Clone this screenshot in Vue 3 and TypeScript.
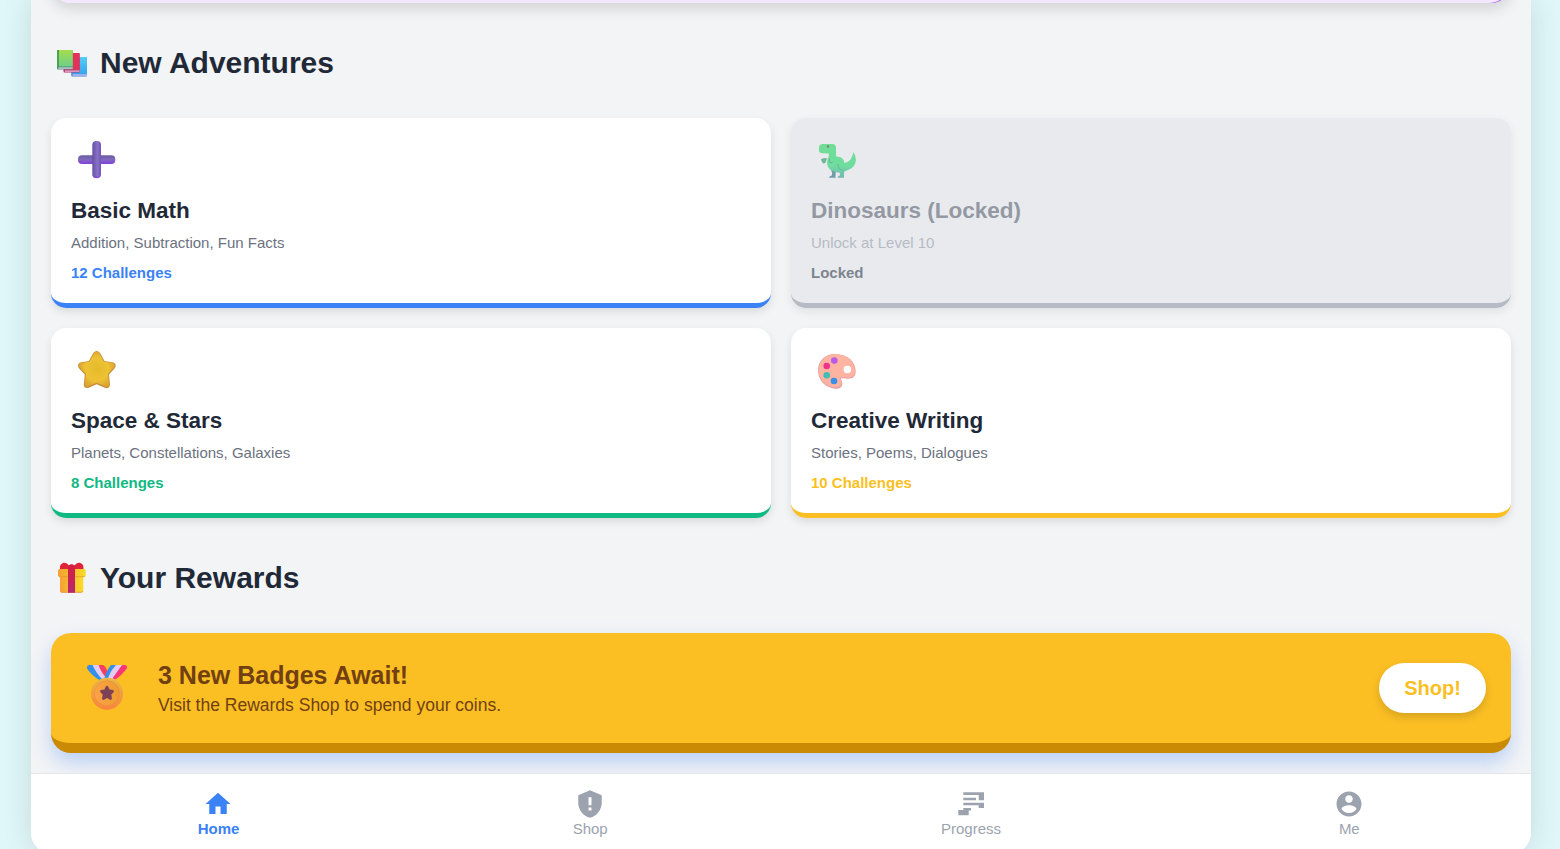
<script setup lang="ts">
interface Adventure {
  id: string
  title: string
  topics: string
  status: string
  tone: string
}

interface NavItem {
  id: string
  label: string
  active: boolean
}

const adventures: Adventure[] = [
  { id: 'math', title: 'Basic Math', topics: 'Addition, Subtraction, Fun Facts', status: '12 Challenges', tone: 'blue' },
  { id: 'dino', title: 'Dinosaurs (Locked)', topics: 'Unlock at Level 10', status: 'Locked', tone: 'locked' },
  { id: 'space', title: 'Space & Stars', topics: 'Planets, Constellations, Galaxies', status: '8 Challenges', tone: 'green' },
  { id: 'writing', title: 'Creative Writing', topics: 'Stories, Poems, Dialogues', status: '10 Challenges', tone: 'yellow' },
]

const navItems: NavItem[] = [
  { id: 'home', label: 'Home', active: true },
  { id: 'shop', label: 'Shop', active: false },
  { id: 'progress', label: 'Progress', active: false },
  { id: 'me', label: 'Me', active: false },
]
</script>

<template>
  <div class="app">
    <main class="content">
      <div class="hero-end"><div class="hero-track"></div></div>

      <h2 class="heading">
        <svg class="heading-icon" viewBox="0 0 34 34">
          <defs>
            <linearGradient id="bookGreen" x1="0" y1="0" x2="0" y2="1"><stop offset="0" stop-color="#a5dc4c" /><stop offset="1" stop-color="#6fd08a" /></linearGradient>
            <linearGradient id="bookBlue" x1="0" y1="0" x2="0" y2="1"><stop offset="0" stop-color="#55cdf5" /><stop offset="1" stop-color="#37a5ee" /></linearGradient>
          </defs>
          <rect x="16.3" y="11" width="15.7" height="19.6" rx="1" fill="#4480d4" />
          <rect x="17.2" y="11" width="14.8" height="17" rx=".8" fill="url(#bookBlue)" />
          <rect x="17.5" y="28.3" width="14.5" height="1.4" fill="#cbc5f2" />
          <rect x="8.5" y="7" width="16.1" height="19.6" rx="1" fill="#b52e68" />
          <rect x="10" y="7" width="14.6" height="17" rx=".8" fill="#e23259" />
          <rect x="9.8" y="24.5" width="14.6" height="1.2" fill="#e8c5e5" />
          <rect x="2" y="4" width="15.8" height="19.6" rx="1" fill="#4b8b69" />
          <rect x="2" y="4" width="2" height="17.5" rx=".8" fill="#49a353" />
          <rect x="4" y="4" width="13.8" height="16.5" rx=".6" fill="url(#bookGreen)" />
          <rect x="3.3" y="21.4" width="14.4" height="1.4" fill="#d0cbec" />
        </svg>
        <span>New Adventures</span>
      </h2>

      <section class="grid">
        <article v-for="card in adventures" :key="card.id" class="card" :class="card.tone">
          <svg v-if="card.id === 'math'" class="card-icon" viewBox="0 0 50 50">
            <defs>
              <linearGradient id="plusH" x1="0" y1="0" x2="0" y2="1"><stop offset="0" stop-color="#6b5d9d" /><stop offset=".5" stop-color="#8069bd" /><stop offset="1" stop-color="#843fe0" /></linearGradient>
              <linearGradient id="plusV" x1="0" y1="0" x2="1" y2="0"><stop offset="0" stop-color="#6650a4" /><stop offset=".6" stop-color="#8872c4" /><stop offset="1" stop-color="#7153b8" /></linearGradient>
            </defs>
            <rect x="7" y="17.3" width="37.3" height="8.7" rx="4" fill="url(#plusH)" />
            <rect x="21.3" y="3" width="8.7" height="37.2" rx="4" fill="url(#plusV)" />
            <path d="M24 38.5q1.7 1.5 3.5 0" stroke="#8a45e6" stroke-width="1.4" fill="none" />
          </svg>

          <svg v-else-if="card.id === 'dino'" class="card-icon" viewBox="0 0 50 50">
            <defs>
              <linearGradient id="dinoSkin" x1="0" y1="0" x2="0" y2="1"><stop offset="0" stop-color="#39d56c" /><stop offset=".65" stop-color="#38d47b" /><stop offset="1" stop-color="#3f9b98" /></linearGradient>
            </defs>
            <path d="M19 29l6 3-.5 5v2.700h-6.500q.3-1.700 3-2.400l.2-2.300z" fill="#37778a" />
            <path d="M8 9.500Q8 6 12 6h9q4 0 4 4v7.500q0 1.300 2 1.300 5.500.3 6.500 6.200 7.500-1.500 8.800-10.700 2.500 2.500 2.700 7.500-.4 8.500-10.500 11.300l-1.500 1 0 5.600h-6.500q.2-1.700 2.700-2.400l-.6-2.500q-9.600-1.100-12-6.500-1.500-5.500 1-9.300l.2-3.500-6.800-.2Q8 14.800 8 13z" fill="url(#dinoSkin)" />
            <path d="M16 20l-3.500.3-2.200.7q-.6 1.500.5 2.200l1.200 2.300 2.300-.4.600-1.500" fill="#379a72" />
            <path d="M18.500 20.500v3.500q1.500 1.500 3.200.2M27 26q-.3 4.500 4.500 6.500" fill="none" stroke="#269e65" stroke-width="1" />
            <circle cx="17" cy="8.500" r="1.200" fill="#573f42" />
          </svg>

          <svg v-else-if="card.id === 'space'" class="card-icon" viewBox="0 0 50 50">
            <defs>
              <radialGradient id="starGold"><stop offset="0" stop-color="#e4b92b" /><stop offset=".65" stop-color="#edc233" /><stop offset="1" stop-color="#dda732" /></radialGradient>
            </defs>
            <path d="M22.300 5q3.400-4 6.800 0l4.400 8 9 1.500q3.700 1.800 1.200 5.700l-5.700 6.300 1 10q-.4 4.300-4.700 3.500l-8.600-3.700-8.600 3.700q-4.300.6-4.300-3.500l1-10-5.900-6.300q-2.200-4 1.200-5.700l8.800-1.500z" fill="#c88f38" />
            <path d="M23.200 4.900q2.500-2.600 5 0l4.500 8.700 9.400 1.400q2.700 1.400.9 4.200l-6 6.600 1.200 10.200q-.2 3.100-3.400 2.700l-9.100-4-9.100 4q-2.700.4-2.900-2.700l1.200-10.200-6.200-6.600q-1.500-2.800.9-4.200l9.100-1.400z" fill="url(#starGold)" />
          </svg>

          <svg v-else class="card-icon" viewBox="0 0 50 50">
            <path d="M23.500 6C38 6 45 14.500 44.700 24c-.3 5-3.500 6.700-7.200 6.700-2.500 0-7-1-7.500 0-.4 1.500 2 2.500 1.300 5.700-.7 3.600-3.800 4.600-7.300 4.300C14.500 39.500 7 33 7 22.500 7 12 15 6 23.500 6zm12.800 11.600a4 4 0 1 0 0 8 4 4 0 0 0 0-8z" fill="#e8a0a4" fill-rule="evenodd" />
            <path d="M23.500 6.200C37.500 6.200 44 14.500 44 23.500c-.3 4.500-3.500 6-6.500 6-2.500 0-7.800-1-8.300.4-.4 1.800 1.800 3 1.200 5.700-.7 3-3.800 4-6.400 3.700C15 38.500 7.800 32 7.800 22.500c0-10 7.700-16.300 15.700-16.300zm12.800 11.400a4 4 0 1 0 0 8 4 4 0 0 0 0-8z" fill="#ffb4a1" fill-rule="evenodd" />
            <circle cx="23.300" cy="12.600" r="3.300" fill="#b95be8" />
            <circle cx="15.700" cy="18" r="3.300" fill="#ef338f" />
            <circle cx="15.700" cy="27.200" r="3.300" fill="#40bdb6" />
            <circle cx="23" cy="33" r="3.300" fill="#378fea" />
          </svg>

          <h3>{{ card.title }}</h3>
          <p class="topics">{{ card.topics }}</p>
          <p class="status">{{ card.status }}</p>
        </article>
      </section>

      <h2 class="heading">
        <svg class="heading-icon" viewBox="0 0 34 34">
          <defs>
            <linearGradient id="boxGold"><stop offset="0" stop-color="#f5a035" /><stop offset="1" stop-color="#fbdc27" /></linearGradient>
            <linearGradient id="ribbonRed" x1="0" y1="0" x2="0" y2="1"><stop offset="0" stop-color="#d8203c" /><stop offset="1" stop-color="#b52674" /></linearGradient>
          </defs>
          <path d="M5 14h23.300v15.700q0 2-2 2H7q-2 0-2-2z" fill="url(#boxGold)" />
          <path d="M5.500 30q.5 1.200 1.700 1.300h19q1.400-.1 1.700-1.300" fill="none" stroke="#e7925a" stroke-width=".8" />
          <rect x="3" y="8" width="27.700" height="7.800" rx="1.500" fill="url(#boxGold)" />
          <path d="M4 15.700h26" stroke="#df9833" stroke-width=".7" />
          <path d="M5 8q-.8-4.800 3.500-6.200 3.500-.5 5.500 2.700 2.800-2 5.400 0 2-3.200 5.500-2.700Q29.200 3.200 28.400 8z" fill="#df2439" />
          <path d="M13 5q3.500-3.500 7 0v26.700h-7z" fill="url(#ribbonRed)" />
        </svg>
        <span>Your Rewards</span>
      </h2>

      <section class="banner">
        <svg class="medal" viewBox="0 0 62 60">
          <defs>
            <linearGradient id="medalFace"><stop offset="0" stop-color="#fba246" /><stop offset="1" stop-color="#ed9c31" /></linearGradient>
            <linearGradient id="medalRim" x1="0" y1="0" x2="0" y2="1"><stop offset="0" stop-color="#e9b745" /><stop offset="1" stop-color="#fa833f" /></linearGradient>
          </defs>
          <path d="M13 10h6.500l11 13-7 2Q16 21 11 13.500 10.500 10.500 13 10z" fill="#348fe8" />
          <path d="M16.500 10h7l8 13-4.500 2Q20.500 19 16.500 10z" fill="#e2cdf2" />
          <path d="M22.500 10H27q3 1.500 5 8l-2 4.500Q25.500 18 22.500 10z" fill="#f93d60" />
          <path d="M35 10h6.500L34 24.500l-5.500-1.300Q30 16 35 10z" fill="#348fe8" />
          <path d="M40 10h8L38 25l-6-1Q33.500 17 40 10z" fill="#e2cdf2" />
          <path d="M46 10h3q3 .8 1.500 4Q45 21 39.500 24.500l-3-1.200z" fill="#fa3678" />
          <circle cx="31" cy="38.700" r="16" fill="url(#medalRim)" />
          <circle cx="31" cy="38.200" r="12.600" fill="#e99034" />
          <circle cx="30.700" cy="38.200" r="12" fill="url(#medalFace)" />
          <path d="M29.800 31.600q1.200-1.500 2.400 0l1.400 3 3.400.4q1.700.8.6 2.200l-2.300 2.300.6 4q-.2 1.700-1.800 1.300L31 43l-3.100 1.800q-1.600.4-1.800-1.300l.6-4-2.300-2.300q-1.100-1.400.6-2.200l3.400-.4z" fill="#7d4055" />
        </svg>
        <div class="banner-text">
          <strong>3 New Badges Await!</strong>
          <span>Visit the Rewards Shop to spend your coins.</span>
        </div>
        <button type="button">Shop!</button>
      </section>
    </main>

    <nav class="nav">
      <a v-for="item in navItems" :key="item.id" class="nav-item" :class="{ active: item.active }">
        <svg v-if="item.id === 'home'" viewBox="0 0 24 24"><path d="M10 20v-6h4v6h5v-8h3L12 3 2 12h3v8z" /></svg>
        <svg v-else-if="item.id === 'shop'" viewBox="0 0 24 24"><path fill-rule="evenodd" d="M12 1L2.600 5v6c0 5.550 4 10.740 9.400 12 5.400-1.260 9.400-6.450 9.400-12V5zM10.800 6.500h2.400v6.500h-2.400zM10.800 14.800h2.400v2.400h-2.400z" /></svg>
        <svg v-else-if="item.id === 'progress'" viewBox="0 0 30 30"><path d="M7.300 3.300H28v8h-5.300V6H7.300zM7.300 8.700H20v2.600H7.300zM7.300 13.700H28V19h-5.300v-2.700H7.300zM7.300 19H15v2.500h-2.300v4.800H2.300V21h5z" /></svg>
        <svg v-else viewBox="0 0 24 24"><path d="M12 2C6.480 2 2 6.480 2 12s4.480 10 10 10 10-4.480 10-10S17.520 2 12 2zm0 3c1.660 0 3 1.340 3 3s-1.340 3-3 3-3-1.340-3-3 1.340-3 3-3zm0 14.200c-2.500 0-4.710-1.280-6-3.220.03-1.990 4-3.080 6-3.080 1.990 0 5.970 1.090 6 3.080-1.290 1.940-3.500 3.220-6 3.220z" /></svg>
        <span>{{ item.label }}</span>
      </a>
    </nav>
  </div>
</template>

<style>
body {
  height: 849px;
  overflow: hidden;
  background: #e0f7fa;
}
</style>

<style scoped>
* {
  box-sizing: border-box;
}

.app {
  width: 1500px;
  height: 853px;
  margin-left: 31px;
  display: flex;
  flex-direction: column;
  overflow: hidden;
  background: #f3f4f6;
  border-radius: 0 0 20px 20px;
  box-shadow: 0 0 30px rgba(0, 0, 0, 0.13);
  font-family: Arial, 'Liberation Sans', sans-serif;
  color: #1f2937;
}

.content {
  display: flex;
  flex-direction: column;
  justify-content: flex-end;
  height: 773px;
  flex: none;
  padding: 0 20px 20px;
  overflow: hidden;
}

.hero-end {
  flex: none;
  height: 60px;
  overflow: hidden;
  background: linear-gradient(90deg, #f3e8ff 50%, #a855f7 50%);
  border-radius: 20px;
  box-shadow: 0 5px 15px rgba(0, 0, 0, 0.15);
}

.hero-track {
  height: 60px;
  background: #f3e8ff;
  border-radius: 0 0 23px 0 / 0 0 21px 0;
}

.heading {
  display: flex;
  flex: none;
  align-items: center;
  height: 34px;
  margin: 43px 0 38px;
  font-size: 30px;
  line-height: 34px;
  font-weight: 700;
}

.heading-icon {
  width: 34px;
  height: 34px;
  margin: 0 11px 0 4px;
}

.grid {
  display: grid;
  flex: none;
  grid-template-columns: 1fr 1fr;
  gap: 20px;
}

.card {
  height: 190px;
  padding: 20px;
  background: #fff;
  border-bottom: 5px solid #3b82f6;
  border-radius: 15px;
  box-shadow: 0 4px 8px rgba(0, 0, 0, 0.1);
}

.card-icon {
  display: block;
  width: 50px;
  height: 50px;
}

.card h3 {
  margin: 10px 0 0;
  font-size: 22.5px;
  line-height: 25px;
}

.card p {
  margin: 11px 0 0;
  font-size: 15px;
  line-height: 17px;
}

.card .topics {
  color: #6b7280;
}

.card .status {
  margin-top: 13px;
  font-weight: 700;
  color: #3b82f6;
}

.card.green {
  border-color: #10b981;
}

.green .status {
  color: #10b981;
}

.card.yellow {
  border-color: #fbbf24;
}

.yellow .status {
  color: #fbbf24;
}

.card.locked {
  background: #e5e7eb;
  border-color: #9ca3af;
  opacity: 0.7;
}

.locked h3 {
  color: #6b7280;
}

.locked .topics {
  color: #9ca3af;
}

.locked .status {
  color: #4b5563;
}

.banner {
  display: flex;
  flex: none;
  align-items: center;
  height: 120px;
  padding: 0 25px;
  background: #fbbf24;
  border-bottom: 10px solid #ca8a04;
  border-radius: 20px;
  box-shadow: 0 10px 20px rgba(59, 130, 246, 0.3);
}

.medal {
  width: 62px;
  height: 60px;
  margin-right: 20px;
  margin-bottom: 6px;
}

.banner-text {
  display: flex;
  flex: 1;
  flex-direction: column;
  color: #713f12;
}

.banner-text strong {
  font-size: 25px;
  line-height: 28px;
}

.banner-text span {
  margin-top: 6px;
  font-size: 17.5px;
  line-height: 21px;
}

.banner button {
  width: 107px;
  height: 50px;
  padding: 0;
  border: 0;
  border-radius: 25px;
  background: #fff;
  color: #fbbf24;
  font: 700 20px Arial, 'Liberation Sans', sans-serif;
  box-shadow: 0 4px 8px rgba(0, 0, 0, 0.15);
}

.nav {
  display: flex;
  flex: 1;
  justify-content: space-around;
  padding-top: 15px;
  background: #fff;
  border-top: 1px solid #e5e7eb;
}

.nav-item {
  display: flex;
  flex-direction: column;
  align-items: center;
  color: #9ca3af;
  font-size: 15px;
  line-height: 17px;
}

.nav-item svg {
  width: 30px;
  height: 30px;
  margin-bottom: 1px;
  fill: currentColor;
}

.nav-item.active {
  color: #3b82f6;
  font-weight: 700;
}
</style>
